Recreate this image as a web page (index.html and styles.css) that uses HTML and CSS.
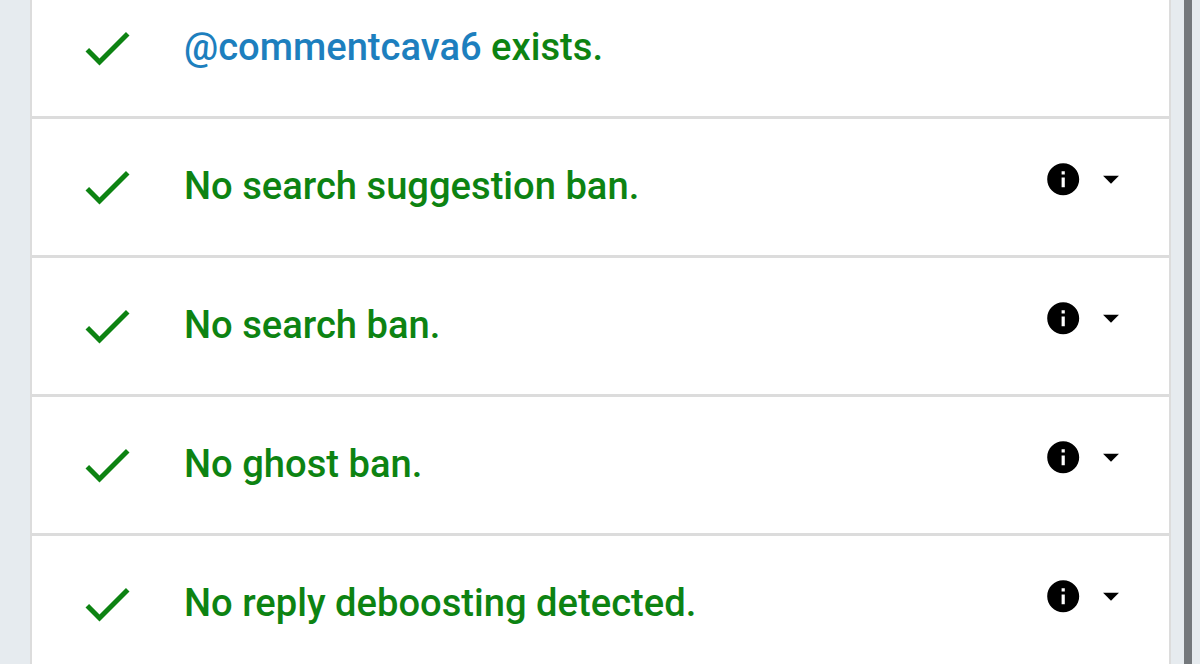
FILE: index.html
```html
<!DOCTYPE html>
<html lang="en">
<head>
    <meta charset="UTF-8">
    <meta name="viewport" content="width=device-width, initial-scale=1.0">
    <title>Shadowban Test</title>
    <link rel="stylesheet" href="styles.css">
</head>
<body>
    <svg class="sprite" aria-hidden="true">
        <symbol id="check" viewBox="0 0 24 24"><path d="M9 16.17L4.83 12l-1.42 1.41L9 19 21 7l-1.41-1.41z"/></symbol>
        <symbol id="info" viewBox="0 0 24 24"><path d="M12 2C6.48 2 2 6.48 2 12s4.48 10 10 10 10-4.48 10-10S17.52 2 12 2zm1 15h-2v-6h2v6zm0-8h-2V7h2v2z"/></symbol>
        <symbol id="caret" viewBox="0 0 24 24"><path d="M7 10l5 5 5-5z"/></symbol>
    </svg>
    <ul class="results">
        <li class="row first">
            <svg class="check"><use href="#check"/></svg>
            <span class="text"><a href="#">@commentcava6</a> exists.</span>
        </li>
        <li class="row">
            <svg class="check"><use href="#check"/></svg>
            <span class="text">No search suggestion ban.</span>
            <svg class="info"><use href="#info"/></svg>
            <svg class="caret"><use href="#caret"/></svg>
        </li>
        <li class="row">
            <svg class="check"><use href="#check"/></svg>
            <span class="text">No search ban.</span>
            <svg class="info"><use href="#info"/></svg>
            <svg class="caret"><use href="#caret"/></svg>
        </li>
        <li class="row">
            <svg class="check"><use href="#check"/></svg>
            <span class="text">No ghost ban.</span>
            <svg class="info"><use href="#info"/></svg>
            <svg class="caret"><use href="#caret"/></svg>
        </li>
        <li class="row last">
            <svg class="check"><use href="#check"/></svg>
            <span class="text">No reply deboosting detected.</span>
            <svg class="info"><use href="#info"/></svg>
            <svg class="caret"><use href="#caret"/></svg>
        </li>
    </ul>
    <div class="scrollbar"></div>
</body>
</html>
```

FILE: styles.css
```css
* {
    box-sizing: border-box;
}
body {
    margin: 0;
    height: 664px;
    display: flex;
    overflow: hidden;
    background-color: #e6ebef;
    font-family: Roboto, sans-serif;
}
.sprite {
    display: none;
}
.results {
    width: 1141px;
    height: 664px;
    margin: 0 0 0 30px;
    padding: 0;
    flex-shrink: 0;
    list-style: none;
    background-color: #fff;
    border: 2px solid #dcdcdc;
    border-top: none;
    border-bottom: none;
}
.row {
    display: flex;
    align-items: flex-start;
    height: 139px;
    padding: 38px 0 0 45px;
    border-bottom: 3px solid #dcdcdc;
}
.row.first {
    height: 119px;
    padding-top: 18px;
}
.row.last {
    height: 128px;
    border-bottom: none;
}
.check {
    width: 60px;
    height: 60px;
    flex-shrink: 0;
    fill: #0d8312;
}
.text {
    width: 820px;
    margin: 5px 0 0 47px;
    flex-shrink: 0;
    color: #0d8312;
    font-size: 38.15px;
    font-weight: 500;
    line-height: 48px;
    white-space: nowrap;
}
.text a {
    color: #1d7fbe;
    text-decoration: none;
}
.info {
    width: 38.4px;
    height: 38.4px;
    margin: 3px 0 0 40.4px;
    flex-shrink: 0;
}
.caret {
    width: 38px;
    height: 38px;
    margin: 3px 0 0 9.2px;
    flex-shrink: 0;
}
.scrollbar {
    width: 8px;
    height: 664px;
    margin-left: 13px;
    background-color: #74787c;
}
```
